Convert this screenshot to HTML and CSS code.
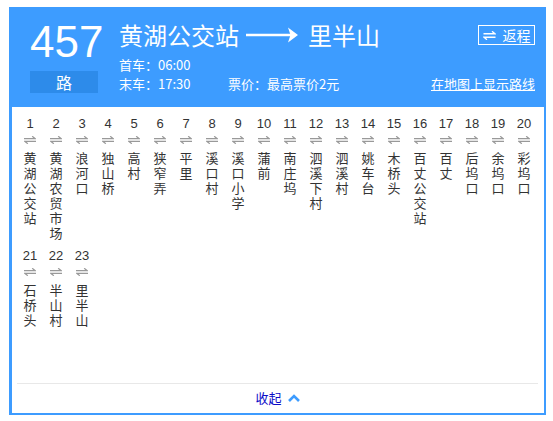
FILE: index.html
```html
<!DOCTYPE html>
<html lang="zh-CN">
<head>
<meta charset="utf-8">
<title>457路</title>
<link rel="stylesheet" href="styles.css">
</head>
<body>
<div class="panel">
  <div class="header">
    <div class="left">
      <div class="num">457</div>
      <div class="lu">路</div>
    </div>
    <div class="main">
      <div class="title-row">
        <span class="title">黄湖公交站</span>
        <svg class="long-arrow" width="52" height="18" viewBox="0 0 52 18"><path d="M0 9H47" stroke="#fff" stroke-width="2.5"/><polygon points="42,1.5 52,9 42,16.5 44.5,9" fill="#fff"/></svg>
        <span class="title">里半山</span>
        <a class="back-btn"><svg width="13" height="9" viewBox="0 0 13 9"><path d="M0.5 2.8H12L9 0.3M12.5 6.2H1L4 8.7" stroke="#fff" stroke-width="1.4" fill="none"/></svg><span>返程</span></a>
      </div>
      <div class="info">首车：06:00</div>
      <div class="info info-row">
        <span class="last">末车：17:30</span>
        <span>票价：最高票价2元</span>
        <a class="map-link">在地图上显示路线</a>
      </div>
    </div>
  </div>
  <div class="stops">
    <div class="stop"><div class="n">1</div><svg class="sw" width="12" height="8" viewBox="0 0 12 8"><path d="M0 2.6H11L8.2 0.3M12 5.4H1L3.8 7.7" stroke="#999" stroke-width="1.3" fill="none"/></svg><div class="name">黄湖公交站</div></div>
    <div class="stop"><div class="n">2</div><svg class="sw" width="12" height="8" viewBox="0 0 12 8"><path d="M0 2.6H11L8.2 0.3M12 5.4H1L3.8 7.7" stroke="#999" stroke-width="1.3" fill="none"/></svg><div class="name">黄湖农贸市场</div></div>
    <div class="stop"><div class="n">3</div><svg class="sw" width="12" height="8" viewBox="0 0 12 8"><path d="M0 2.6H11L8.2 0.3M12 5.4H1L3.8 7.7" stroke="#999" stroke-width="1.3" fill="none"/></svg><div class="name">浪河口</div></div>
    <div class="stop"><div class="n">4</div><svg class="sw" width="12" height="8" viewBox="0 0 12 8"><path d="M0 2.6H11L8.2 0.3M12 5.4H1L3.8 7.7" stroke="#999" stroke-width="1.3" fill="none"/></svg><div class="name">独山桥</div></div>
    <div class="stop"><div class="n">5</div><svg class="sw" width="12" height="8" viewBox="0 0 12 8"><path d="M0 2.6H11L8.2 0.3M12 5.4H1L3.8 7.7" stroke="#999" stroke-width="1.3" fill="none"/></svg><div class="name">高村</div></div>
    <div class="stop"><div class="n">6</div><svg class="sw" width="12" height="8" viewBox="0 0 12 8"><path d="M0 2.6H11L8.2 0.3M12 5.4H1L3.8 7.7" stroke="#999" stroke-width="1.3" fill="none"/></svg><div class="name">狭窄弄</div></div>
    <div class="stop"><div class="n">7</div><svg class="sw" width="12" height="8" viewBox="0 0 12 8"><path d="M0 2.6H11L8.2 0.3M12 5.4H1L3.8 7.7" stroke="#999" stroke-width="1.3" fill="none"/></svg><div class="name">平里</div></div>
    <div class="stop"><div class="n">8</div><svg class="sw" width="12" height="8" viewBox="0 0 12 8"><path d="M0 2.6H11L8.2 0.3M12 5.4H1L3.8 7.7" stroke="#999" stroke-width="1.3" fill="none"/></svg><div class="name">溪口村</div></div>
    <div class="stop"><div class="n">9</div><svg class="sw" width="12" height="8" viewBox="0 0 12 8"><path d="M0 2.6H11L8.2 0.3M12 5.4H1L3.8 7.7" stroke="#999" stroke-width="1.3" fill="none"/></svg><div class="name">溪口小学</div></div>
    <div class="stop"><div class="n">10</div><svg class="sw" width="12" height="8" viewBox="0 0 12 8"><path d="M0 2.6H11L8.2 0.3M12 5.4H1L3.8 7.7" stroke="#999" stroke-width="1.3" fill="none"/></svg><div class="name">蒲前</div></div>
    <div class="stop"><div class="n">11</div><svg class="sw" width="12" height="8" viewBox="0 0 12 8"><path d="M0 2.6H11L8.2 0.3M12 5.4H1L3.8 7.7" stroke="#999" stroke-width="1.3" fill="none"/></svg><div class="name">南庄坞</div></div>
    <div class="stop"><div class="n">12</div><svg class="sw" width="12" height="8" viewBox="0 0 12 8"><path d="M0 2.6H11L8.2 0.3M12 5.4H1L3.8 7.7" stroke="#999" stroke-width="1.3" fill="none"/></svg><div class="name">泗溪下村</div></div>
    <div class="stop"><div class="n">13</div><svg class="sw" width="12" height="8" viewBox="0 0 12 8"><path d="M0 2.6H11L8.2 0.3M12 5.4H1L3.8 7.7" stroke="#999" stroke-width="1.3" fill="none"/></svg><div class="name">泗溪村</div></div>
    <div class="stop"><div class="n">14</div><svg class="sw" width="12" height="8" viewBox="0 0 12 8"><path d="M0 2.6H11L8.2 0.3M12 5.4H1L3.8 7.7" stroke="#999" stroke-width="1.3" fill="none"/></svg><div class="name">姚车台</div></div>
    <div class="stop"><div class="n">15</div><svg class="sw" width="12" height="8" viewBox="0 0 12 8"><path d="M0 2.6H11L8.2 0.3M12 5.4H1L3.8 7.7" stroke="#999" stroke-width="1.3" fill="none"/></svg><div class="name">木桥头</div></div>
    <div class="stop"><div class="n">16</div><svg class="sw" width="12" height="8" viewBox="0 0 12 8"><path d="M0 2.6H11L8.2 0.3M12 5.4H1L3.8 7.7" stroke="#999" stroke-width="1.3" fill="none"/></svg><div class="name">百丈公交站</div></div>
    <div class="stop"><div class="n">17</div><svg class="sw" width="12" height="8" viewBox="0 0 12 8"><path d="M0 2.6H11L8.2 0.3M12 5.4H1L3.8 7.7" stroke="#999" stroke-width="1.3" fill="none"/></svg><div class="name">百丈</div></div>
    <div class="stop"><div class="n">18</div><svg class="sw" width="12" height="8" viewBox="0 0 12 8"><path d="M0 2.6H11L8.2 0.3M12 5.4H1L3.8 7.7" stroke="#999" stroke-width="1.3" fill="none"/></svg><div class="name">后坞口</div></div>
    <div class="stop"><div class="n">19</div><svg class="sw" width="12" height="8" viewBox="0 0 12 8"><path d="M0 2.6H11L8.2 0.3M12 5.4H1L3.8 7.7" stroke="#999" stroke-width="1.3" fill="none"/></svg><div class="name">余坞口</div></div>
    <div class="stop"><div class="n">20</div><svg class="sw" width="12" height="8" viewBox="0 0 12 8"><path d="M0 2.6H11L8.2 0.3M12 5.4H1L3.8 7.7" stroke="#999" stroke-width="1.3" fill="none"/></svg><div class="name">彩坞口</div></div>
    <div class="stop"><div class="n">21</div><svg class="sw" width="12" height="8" viewBox="0 0 12 8"><path d="M0 2.6H11L8.2 0.3M12 5.4H1L3.8 7.7" stroke="#999" stroke-width="1.3" fill="none"/></svg><div class="name">石桥头</div></div>
    <div class="stop"><div class="n">22</div><svg class="sw" width="12" height="8" viewBox="0 0 12 8"><path d="M0 2.6H11L8.2 0.3M12 5.4H1L3.8 7.7" stroke="#999" stroke-width="1.3" fill="none"/></svg><div class="name">半山村</div></div>
    <div class="stop"><div class="n">23</div><svg class="sw" width="12" height="8" viewBox="0 0 12 8"><path d="M0 2.6H11L8.2 0.3M12 5.4H1L3.8 7.7" stroke="#999" stroke-width="1.3" fill="none"/></svg><div class="name">里半山</div></div>
  </div>
  <div class="footer">
    <a class="collapse">收起<svg width="12" height="8" viewBox="0 0 12 8"><path d="M1 7L6 2L11 7" stroke="#3d9cff" stroke-width="2.6" fill="none"/></svg></a>
  </div>
</div>
</body>
</html>
```

FILE: styles.css
```css
html, body {
  margin: 0;
  padding: 0;
  background: #fff;
}
body {
  font-family: "Noto Sans CJK SC", sans-serif;
  color: #333;
}
.panel {
  margin: 7px 0 0 9px;
  width: 532px;
  height: 404px;
  border: 2px solid #3d9cff;
  border-left-width: 3px;
  display: flex;
  flex-direction: column;
}
.header {
  background: #3d9cff;
  margin-top: -2px;
  padding: 13px 9px 0 18px;
  box-sizing: border-box;
  height: 100px;
  display: flex;
  color: #fff;
}
.left {
  width: 68px;
  margin-right: 21px;
}
.num {
  font-family: "Liberation Sans", sans-serif;
  font-size: 44px;
  line-height: 44px;
  text-align: center;
}
.lu {
  margin-top: 7px;
  height: 22px;
  line-height: 22px;
  background: #2d8bea;
  text-align: center;
  font-size: 16px;
}
.main {
  flex: 1;
  padding-top: 3px;
}
.title-row {
  display: flex;
  align-items: center;
  height: 24px;
}
.title {
  font-size: 24px;
  line-height: 24px;
}
.long-arrow {
  margin: 0 10px 0 7px;
}
.back-btn {
  margin-left: auto;
  width: 55px;
  height: 18px;
  border: 1px solid #fff;
  display: flex;
  align-items: center;
  justify-content: center;
  gap: 7px;
  font-size: 14px;
  line-height: 18px;
  color: #fff;
}
.info {
  font-size: 13px;
  line-height: 19px;
}
.title-row + .info {
  margin-top: 8px;
}
.info-row {
  display: flex;
}
.last {
  width: 109px;
}
.map-link {
  margin-left: auto;
  color: #fff;
  text-decoration: underline;
}
.stops {
  height: 276px;
  box-sizing: border-box;
  padding: 9px 6px 0 5px;
  display: flex;
  flex-wrap: wrap;
  align-content: flex-start;
}
.stop {
  width: 26px;
  display: flex;
  flex-direction: column;
  align-items: center;
  margin-bottom: 8px;
}
.n {
  font-family: "Liberation Sans", sans-serif;
  font-size: 13px;
  line-height: 15px;
  color: #333;
}
.sw {
  display: block;
  margin: 5px 0 6px;
}
.name {
  width: 13px;
  font-size: 13px;
  line-height: 15px;
  word-break: break-all;
  color: #333;
}
.footer {
  margin: 0 6px 0 5px;
  border-top: 1px solid #e8e8e8;
  height: 28px;
  display: flex;
  align-items: center;
  justify-content: center;
}
.collapse {
  display: flex;
  align-items: center;
  gap: 6px;
  font-size: 13px;
  color: #0c0cc8;
  line-height: 28px;
}
```
